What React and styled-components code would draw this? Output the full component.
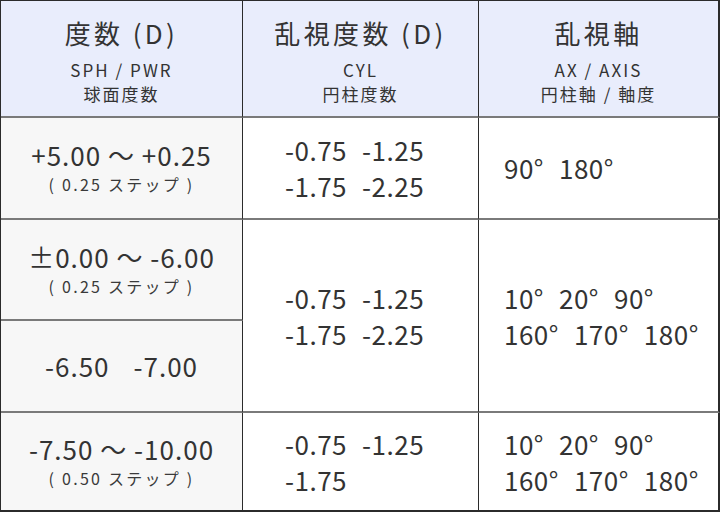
import React from 'react';
import styled, { createGlobalStyle } from 'styled-components';

const GlobalStyle = createGlobalStyle`
  html, body {
    margin: 0;
    padding: 0;
    background: #ffffff;
  }
  * {
    box-sizing: border-box;
  }
`;

const Table = styled.table`
  width: 720px;
  border-collapse: separate;
  border-spacing: 0;
  table-layout: fixed;
  border-top: 1px solid #2b2b2b;
  border-left: 1px solid #2b2b2b;
  font-family: "Noto Sans CJK JP", "Noto Sans", sans-serif;
  color: #333333;
`;

const Row = styled.tr`
  height: ${(p) => p.h}px;
`;

const Head = styled.th`
  width: ${(p) => p.w}px;
  padding: 12px 0 0;
  vertical-align: top;
  text-align: center;
  font-weight: 400;
  background: #e9edfc;
  border-right: ${(p) => (p.last ? '2px' : '1px')} solid #2b2b2b;
  border-bottom: 2px solid #7a7a7a;
`;

const Title = styled.div`
  font-size: 26px;
  line-height: 40px;
  letter-spacing: 0.13em;
`;

const Sub = styled.div`
  margin-top: 5px;
  font-size: 17px;
  line-height: 24px;
  letter-spacing: 0.12em;
  & + & {
    margin-top: 0;
  }
`;

const Cell = styled.td`
  padding: 0 0 0 ${(p) => p.pad || 0}px;
  vertical-align: middle;
  text-align: ${(p) => (p.center ? 'center' : 'left')};
  background: ${(p) => (p.shade ? '#f7f7f7' : '#ffffff')};
  border-right: ${(p) => (p.last ? '2px solid #2b2b2b' : '1px solid #2b2b2b')};
  border-bottom: ${(p) => (p.bottom ? '2px solid #2b2b2b' : '2px solid #7a7a7a')};
`;

const Range = styled.div`
  font-size: 26px;
  line-height: 32px;
  letter-spacing: 1px;
`;

const Step = styled.div`
  font-size: 16px;
  line-height: 26px;
  letter-spacing: 0.14em;
  color: #3a3a3a;
`;

const Values = styled.div`
  display: flex;
  gap: ${(p) => p.gap || 15}px;
  justify-content: ${(p) => (p.center ? 'center' : 'flex-start')};
  font-size: 26px;
  line-height: 36px;
  letter-spacing: ${(p) => (p.center ? '1px' : '0.5px')};
`;

const steps = ['-0.75', '-1.25'];

const Line = ({ items, gap, center }) => (
  <Values gap={gap} center={center}>
    {items.map((v) => (
      <span key={v}>{v}</span>
    ))}
  </Values>
);

const App = () => (
  <>
    <GlobalStyle />
    <Table>
      <thead>
        <Row h={117}>
          <Head w={242}>
            <Title>度数 (D)</Title>
            <Sub>SPH / PWR</Sub>
            <Sub>球面度数</Sub>
          </Head>
          <Head w={236}>
            <Title>乱視度数 (D)</Title>
            <Sub>CYL</Sub>
            <Sub>円柱度数</Sub>
          </Head>
          <Head w={241} last>
            <Title>乱視軸</Title>
            <Sub>AX / AXIS</Sub>
            <Sub>円柱軸 / 軸度</Sub>
          </Head>
        </Row>
      </thead>
      <tbody>
        <Row h={102}>
          <Cell center shade>
            <Range>+5.00 ～ +0.25</Range>
            <Step>( 0.25 ステップ )</Step>
          </Cell>
          <Cell pad={42}>
            <Line items={steps} />
            <Line items={['-1.75', '-2.25']} />
          </Cell>
          <Cell pad={25} last>
            <Line items={['90°', '180°']} />
          </Cell>
        </Row>
        <Row h={101}>
          <Cell center shade>
            <Range>±0.00 ～ -6.00</Range>
            <Step>( 0.25 ステップ )</Step>
          </Cell>
          <Cell pad={42} rowSpan={2}>
            <Line items={steps} />
            <Line items={['-1.75', '-2.25']} />
          </Cell>
          <Cell pad={25} last rowSpan={2}>
            <Line items={['10°', '20°', '90°']} />
            <Line items={['160°', '170°', '180°']} />
          </Cell>
        </Row>
        <Row h={92}>
          <Cell center shade>
            <Line items={['-6.50', '-7.00']} gap={24} center />
          </Cell>
        </Row>
        <Row h={99}>
          <Cell center shade bottom>
            <Range>-7.50 ～ -10.00</Range>
            <Step>( 0.50 ステップ )</Step>
          </Cell>
          <Cell pad={42} bottom>
            <Line items={steps} />
            <Line items={['-1.75']} />
          </Cell>
          <Cell pad={25} last bottom>
            <Line items={['10°', '20°', '90°']} />
            <Line items={['160°', '170°', '180°']} />
          </Cell>
        </Row>
      </tbody>
    </Table>
  </>
);

export default App;
